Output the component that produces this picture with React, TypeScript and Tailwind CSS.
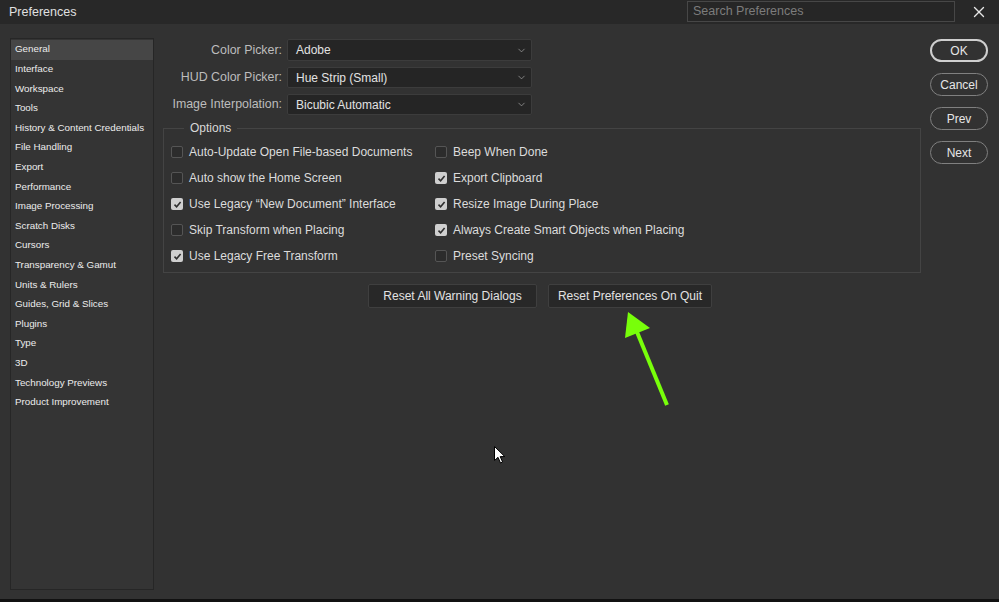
import { ChevronDown, X } from "lucide-react"

const sections = [
  "General",
  "Interface",
  "Workspace",
  "Tools",
  "History & Content Credentials",
  "File Handling",
  "Export",
  "Performance",
  "Image Processing",
  "Scratch Disks",
  "Cursors",
  "Transparency & Gamut",
  "Units & Rulers",
  "Guides, Grid & Slices",
  "Plugins",
  "Type",
  "3D",
  "Technology Previews",
  "Product Improvement",
]

const pickers = [
  { label: "Color Picker:", value: "Adobe" },
  { label: "HUD Color Picker:", value: "Hue Strip (Small)" },
  { label: "Image Interpolation:", value: "Bicubic Automatic" },
]

const leftOptions = [
  { label: "Auto-Update Open File-based Documents", on: false },
  { label: "Auto show the Home Screen", on: false },
  { label: "Use Legacy \u201cNew Document\u201d Interface", on: true },
  { label: "Skip Transform when Placing", on: false },
  { label: "Use Legacy Free Transform", on: true },
]

const rightOptions = [
  { label: "Beep When Done", on: false },
  { label: "Export Clipboard", on: true },
  { label: "Resize Image During Place", on: true },
  { label: "Always Create Smart Objects when Placing", on: true },
  { label: "Preset Syncing", on: false },
]

function Check({ label, on }: { label: string; on: boolean }) {
  return (
    <div className="flex h-[26px] items-center gap-[6px]">
      {on ? (
        <div className="flex h-[12px] w-[12px] items-center justify-center rounded-[2px] bg-[#cfcfcf]">
          <svg width="9" height="9" viewBox="0 0 9 9">
            <path d="M1.5 4.6 L3.6 6.7 L7.6 2" fill="none" stroke="#2e2e2e" strokeWidth="1.6" />
          </svg>
        </div>
      ) : (
        <div className="h-[12px] w-[12px] rounded-[2px] border border-[#555] bg-[#2c2c2c]" />
      )}
      <span className="text-[12px] text-[#dcdcdc]">{label}</span>
    </div>
  )
}

function RoundButton({ label, primary }: { label: string; primary?: boolean }) {
  return (
    <button
      className={
        primary
          ? "h-[23px] w-[58px] rounded-full border-2 border-[#cfcfcf] text-[12px] text-[#e6e6e6]"
          : "h-[23px] w-[58px] rounded-full border-[1.5px] border-[#808080] text-[12px] text-[#e6e6e6]"
      }
    >
      {label}
    </button>
  )
}

export default function App() {
  return (
    <div className="relative flex h-[602px] w-[999px] flex-col overflow-hidden bg-[#323232] font-['Liberation_Sans',Arial,sans-serif]">
      {/* title bar */}
      <div className="flex h-[24px] items-center bg-[#282828] pl-[9px] pr-[11px]">
        <span className="text-[12.5px] text-[#e0e0e0]">Preferences</span>
        <div className="ml-auto mt-[1px] flex h-[21px] w-[268px] items-center self-start border border-[#474747] bg-[#262626] px-[5px] text-[12.5px] text-[#7c7c7c]">
          Search Preferences
        </div>
        <X className="ml-[15px] h-[18px] w-[18px] text-[#e6e6e6]" strokeWidth={1.8} />
      </div>

      <div className="flex flex-1 pb-[9px] pt-[14px]">
        {/* sidebar */}
        <div className="ml-[10px] w-[144px] border border-[#262626] bg-[#343434] py-[1px]">
          {sections.map((s, i) => (
            <div
              key={s}
              className={
                i === 0
                  ? "flex h-[19.6px] items-center bg-[#464646] pl-[4px] text-[9.8px] text-[#ececec]"
                  : "flex h-[19.6px] items-center pl-[4px] text-[9.8px] text-[#ececec]"
              }
            >
              {s}
            </div>
          ))}
        </div>

        {/* main */}
        <div className="ml-[9px] w-[758px]">
          <div className="flex flex-col gap-[6px] pt-[1px]">
            {pickers.map((p, i) => (
              <div key={p.label} className="flex items-center">
                <span className="w-[119px] text-right text-[12.4px] text-[#bdbdbd]">{p.label}</span>
                <div
                  className={
                    (i === 0 ? "h-[22px] " : "h-[21px] ") +
                    "ml-[5px] flex w-[245px] items-center rounded-[2px] border border-[#3c3c3c] bg-[#252525] pl-[8px] pr-[4px] text-[12px] text-[#e2e2e2]"
                  }
                >
                  {p.value}
                  <ChevronDown className="ml-auto h-[11px] w-[11px] text-[#aaa]" strokeWidth={1.5} />
                </div>
              </div>
            ))}
          </div>

          <fieldset className="mt-[6px] border border-[#444] px-[7px] pb-[3px]">
            <legend className="ml-[13px] px-[6px] text-[12px] leading-[14px] text-[#d8d8d8]">Options</legend>
            <div className="flex pt-[4px]">
              <div className="w-[264px]">
                {leftOptions.map((o) => (
                  <Check key={o.label} {...o} />
                ))}
              </div>
              <div>
                {rightOptions.map((o) => (
                  <Check key={o.label} {...o} />
                ))}
              </div>
            </div>
          </fieldset>

          <div className="mt-[11px] flex justify-center gap-[11px] pr-[4px]">
            <button className="h-[24px] w-[169px] rounded-[2px] border border-[#3f3f3f] bg-[#282828] text-[12px] text-[#e2e2e2]">
              Reset All Warning Dialogs
            </button>
            <button className="h-[24px] w-[164px] rounded-[2px] border border-[#3f3f3f] bg-[#282828] text-[12px] text-[#e2e2e2]">
              Reset Preferences On Quit
            </button>
          </div>
        </div>

        {/* right buttons */}
        <div className="ml-[9px] flex flex-col gap-[11px] pt-[1px]">
          <RoundButton label="OK" primary />
          <RoundButton label="Cancel" />
          <RoundButton label="Prev" />
          <RoundButton label="Next" />
        </div>
      </div>

      <div className="h-[3px] bg-[#111]" />

      {/* annotation arrow */}
      <svg className="absolute left-0 top-0" width="999" height="602" viewBox="0 0 999 602">
        <line x1="667" y1="405" x2="637" y2="332" stroke="#78ff0a" strokeWidth="4" />
        <polygon points="628,312 625,338 650,328" fill="#78ff0a" />
      </svg>

      {/* mouse pointer */}
      <svg className="absolute left-[494px] top-[446px]" width="13" height="20" viewBox="0 0 13 20">
        <path d="M0.5 0.5 L0.5 14.5 L4 11.3 L6.5 17 L8.6 16 L6.2 10.6 L10.8 10.6 Z" fill="#fff" stroke="#000" strokeWidth="1" />
      </svg>
    </div>
  )
}
